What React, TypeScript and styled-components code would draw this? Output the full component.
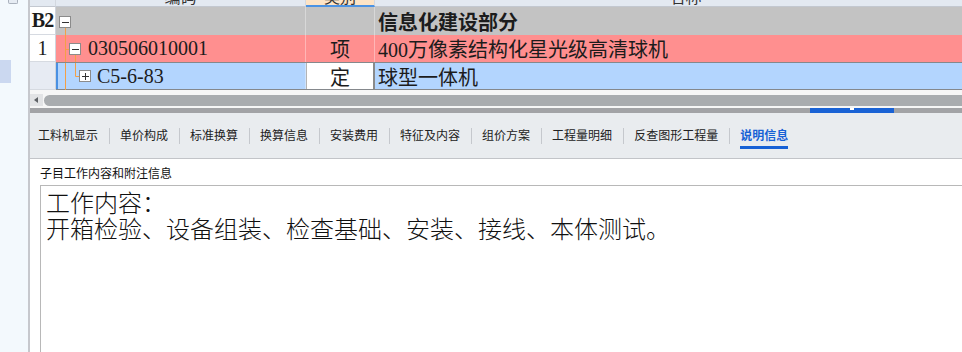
import React from 'react';
import styled, { createGlobalStyle, css } from 'styled-components';

const GlobalStyle = createGlobalStyle`
  html, body {
    margin: 0;
    padding: 0;
    background: #ffffff;
    overflow: hidden;
  }
  * {
    box-sizing: border-box;
  }
`;

const Shell = styled.div`
  display: flex;
  width: 962px;
  height: 352px;
  overflow: hidden;
  font-family: "Noto Sans CJK SC", sans-serif;
`;

const Sidebar = styled.div`
  width: 30px;
  flex-shrink: 0;
  display: flex;
  flex-direction: column;
  background: #f3f9fd;
  border-right: 2px solid #c6c8cd;
`;

const TopButton = styled.div`
  width: 10px;
  height: 4px;
  margin-left: 8px;
  background: #e6ecf3;
  border: 1px solid #aab2bd;
  border-top: none;
  border-radius: 0 0 2px 2px;
`;

const NavMark = styled.div`
  width: 11px;
  height: 23px;
  margin-top: 56px;
  background: #cbd8f0;
`;

const Main = styled.div`
  flex: 1;
  min-width: 0;
  display: flex;
  flex-direction: column;
`;

const Grid = styled.div`
  height: 90px;
  flex-shrink: 0;
  overflow: hidden;
  display: flex;
  flex-direction: column;
  font-family: "Liberation Serif", "Noto Sans CJK SC", serif;
  font-size: 20px;
  color: #1c1c1c;
`;

const HeadRow = styled.div`
  display: flex;
  height: 7px;
  flex-shrink: 0;
`;

const HeadCell = styled.div<{ $w: number; $active?: boolean }>`
  width: ${p => p.$w}px;
  flex-shrink: 0;
  overflow: hidden;
  text-align: center;
  background: ${p => (p.$active ? '#fde4c6' : '#e3e9f1')};
  border-bottom: ${p => (p.$active ? '2px solid #4b93e4' : '1px solid #c3c8d0')};
  border-right: 1px solid #d3d8e0;
  font-family: "Noto Sans CJK SC", sans-serif;
  font-size: 16px;
  line-height: 16px;
  color: #333;
  & > span {
    display: block;
    margin-top: -12px;
  }
`;

type Tone = 'group' | 'item' | 'sub';

const toneBg: Record<Tone, string> = {
  group: '#c3c3c3',
  item: '#ff8f8f',
  sub: '#b3d5fe',
};

const Row = styled.div<{ $h: number }>`
  display: flex;
  height: ${p => p.$h}px;
  flex-shrink: 0;
`;

const NumCell = styled.div<{ $selected?: boolean; $bold?: boolean }>`
  width: 26px;
  flex-shrink: 0;
  display: flex;
  align-items: center;
  justify-content: center;
  background: ${p => (p.$selected ? '#e7ebf3' : '#ffffff')};
  border-right: 1px solid #cfd4dc;
  border-bottom: 1px solid #d6dae1;
  font-size: 20px;
  font-weight: ${p => (p.$bold ? 700 : 400)};
  letter-spacing: ${p => (p.$bold ? '-1px' : '0')};
`;

const Cells = styled.div<{ $tone: Tone; $selected?: boolean }>`
  display: flex;
  flex-shrink: 0;
  height: 100%;
  background: ${p => toneBg[p.$tone]};
  ${p =>
    p.$selected &&
    css`
      border-top: 1px solid #85888c;
      border-bottom: 1px solid #85888c;
    `}
`;

const CodeCell = styled.div<{ $selected?: boolean }>`
  width: 250px;
  display: flex;
  align-items: center;
  border-right: 1px solid rgba(255, 255, 255, 0.35);
  white-space: nowrap;
  ${p =>
    p.$selected &&
    css`
      box-shadow: inset 2px 0 0 #4a90e2;
    `}
`;

const TypeCell = styled.div<{ $selected?: boolean }>`
  width: 69px;
  display: flex;
  align-items: center;
  justify-content: center;
  border-right: 1px solid rgba(255, 255, 255, 0.35);
  ${p =>
    p.$selected &&
    css`
      background: #ffffff;
      border-left: 1px solid #b4b4b4;
      border-right: 2px solid #8a8a8a;
    `}
`;

const NameCell = styled.div<{ $bold?: boolean }>`
  width: 622px;
  display: flex;
  align-items: center;
  padding-left: 3px;
  white-space: nowrap;
  font-weight: ${p => (p.$bold ? 700 : 400)};
`;

const Gutter = styled.svg`
  flex-shrink: 0;
  overflow: visible;
`;

const HScroll = styled.div`
  height: 18px;
  flex-shrink: 0;
  display: flex;
  padding: 4px 0 2px;
  background: #f6f6f6;
`;

const ScrollArrow = styled.div`
  width: 13px;
  display: flex;
  align-items: center;
  padding-left: 4px;
  background: #e2e3e5;
  &::before {
    content: '';
    border-right: 4px solid #5f6266;
    border-top: 3px solid transparent;
    border-bottom: 3px solid transparent;
  }
`;

const ScrollThumb = styled.div`
  flex: 1;
  margin-left: 1px;
  margin-top: 1px;
  background: #a9acaf;
  border-radius: 6px 0 0 6px;
`;

const Splitter = styled.div`
  height: 5px;
  flex-shrink: 0;
  display: flex;
  background: #a2a3a6;
`;

const SplitGrip = styled.div`
  margin-left: 780px;
  width: 84px;
  display: flex;
  justify-content: center;
  background: #1962d5;
  &::after {
    content: '';
    width: 4px;
    height: 2px;
    background: #ffffff;
  }
`;

const TabBar = styled.div`
  height: 46px;
  flex-shrink: 0;
  display: flex;
  align-items: center;
  padding-left: 8px;
  background: #e9ecef;
  border-bottom: 1px solid #c2c4c8;
`;

const Tab = styled.div<{ $active?: boolean }>`
  font-size: 12px;
  line-height: 16px;
  padding: 4px 0 3px;
  white-space: nowrap;
  color: ${p => (p.$active ? '#1761d6' : '#222222')};
  font-weight: ${p => (p.$active ? 700 : 400)};
  border-bottom: 3px solid ${p => (p.$active ? '#1761d6' : 'transparent')};
`;

const TabDivider = styled.span`
  width: 1px;
  height: 16px;
  margin: 0 10px 0 11px;
  background: #c5c8cd;
`;

const Detail = styled.div`
  flex: 1;
  min-height: 0;
  display: flex;
  flex-direction: column;
  padding: 6px 0 0 10px;
  background: #ffffff;
`;

const DetailLabel = styled.div`
  font-size: 12px;
  line-height: 16px;
  color: #111111;
`;

const NoteBox = styled.div`
  flex: 1;
  margin-top: 4px;
  padding: 3px 0 0 5px;
  border: 1px solid #b8b8b8;
  border-right: none;
  border-bottom: none;
  font-size: 24px;
  line-height: 26px;
  font-weight: 300;
  color: #111111;
`;

const NoteLine = styled.div`
  white-space: nowrap;
`;

const LINE = '#f3a046';
const BOX = '#8b8b8b';

function ExpandBox({ x, y, open }: { x: number; y: number; open: boolean }) {
  return (
    <>
      <rect x={x + 0.5} y={y + 0.5} width={11} height={11} fill="#fff" stroke={BOX} />
      <line x1={x + 3} y1={y + 6.5} x2={x + 10} y2={y + 6.5} stroke="#333" />
      {!open && <line x1={x + 6.5} y1={y + 3} x2={x + 6.5} y2={y + 10} stroke="#333" />}
    </>
  );
}

const tabs = [
  '工料机显示',
  '单价构成',
  '标准换算',
  '换算信息',
  '安装费用',
  '特征及内容',
  '组价方案',
  '工程量明细',
  '反查图形工程量',
  '说明信息',
];

export default function App() {
  return (
    <>
      <GlobalStyle />
      <Shell>
        <Sidebar>
          <TopButton />
          <NavMark />
        </Sidebar>
        <Main>
          <Grid>
            <HeadRow>
              <HeadCell $w={26} />
              <HeadCell $w={250}><span>编码</span></HeadCell>
              <HeadCell $w={69} $active><span>类别</span></HeadCell>
              <HeadCell $w={622}><span>名称</span></HeadCell>
            </HeadRow>

            <Row $h={28}>
              <NumCell $bold>B2</NumCell>
              <Cells $tone="group">
                <CodeCell>
                  <Gutter width={20} height={28}>
                    <line x1={9.5} y1={20} x2={9.5} y2={28} stroke={LINE} />
                    <ExpandBox x={3} y={9} open />
                  </Gutter>
                </CodeCell>
                <TypeCell />
                <NameCell $bold>信息化建设部分</NameCell>
              </Cells>
            </Row>

            <Row $h={27}>
              <NumCell>1</NumCell>
              <Cells $tone="item">
                <CodeCell>
                  <Gutter width={32} height={27}>
                    <line x1={9.5} y1={0} x2={9.5} y2={27} stroke={LINE} />
                    <line x1={9.5} y1={14.5} x2={13} y2={14.5} stroke={LINE} />
                    <line x1={19.5} y1={20} x2={19.5} y2={27} stroke={LINE} />
                    <ExpandBox x={13} y={8} open />
                  </Gutter>
                  030506010001
                </CodeCell>
                <TypeCell>项</TypeCell>
                <NameCell>400万像素结构化星光级高清球机</NameCell>
              </Cells>
            </Row>

            <Row $h={28}>
              <NumCell $selected />
              <Cells $tone="sub" $selected>
                <CodeCell $selected>
                  <Gutter width={41} height={26}>
                    <line x1={9.5} y1={0} x2={9.5} y2={27} stroke={LINE} />
                    <line x1={19.5} y1={0} x2={19.5} y2={13.5} stroke={LINE} />
                    <line x1={19.5} y1={13.5} x2={23} y2={13.5} stroke={LINE} />
                    <ExpandBox x={23} y={7} open={false} />
                  </Gutter>
                  C5-6-83
                </CodeCell>
                <TypeCell $selected>定</TypeCell>
                <NameCell>球型一体机</NameCell>
              </Cells>
            </Row>
          </Grid>

          <HScroll>
            <ScrollArrow />
            <ScrollThumb />
          </HScroll>

          <Splitter>
            <SplitGrip />
          </Splitter>

          <TabBar>
            {tabs.map((t, i) => (
              <React.Fragment key={t}>
                {i > 0 && <TabDivider />}
                <Tab $active={t === '说明信息'}>{t}</Tab>
              </React.Fragment>
            ))}
          </TabBar>

          <Detail>
            <DetailLabel>子目工作内容和附注信息</DetailLabel>
            <NoteBox>
              <NoteLine>工作内容：</NoteLine>
              <NoteLine>开箱检验、设备组装、检查基础、安装、接线、本体测试。</NoteLine>
            </NoteBox>
          </Detail>
        </Main>
      </Shell>
    </>
  );
}
